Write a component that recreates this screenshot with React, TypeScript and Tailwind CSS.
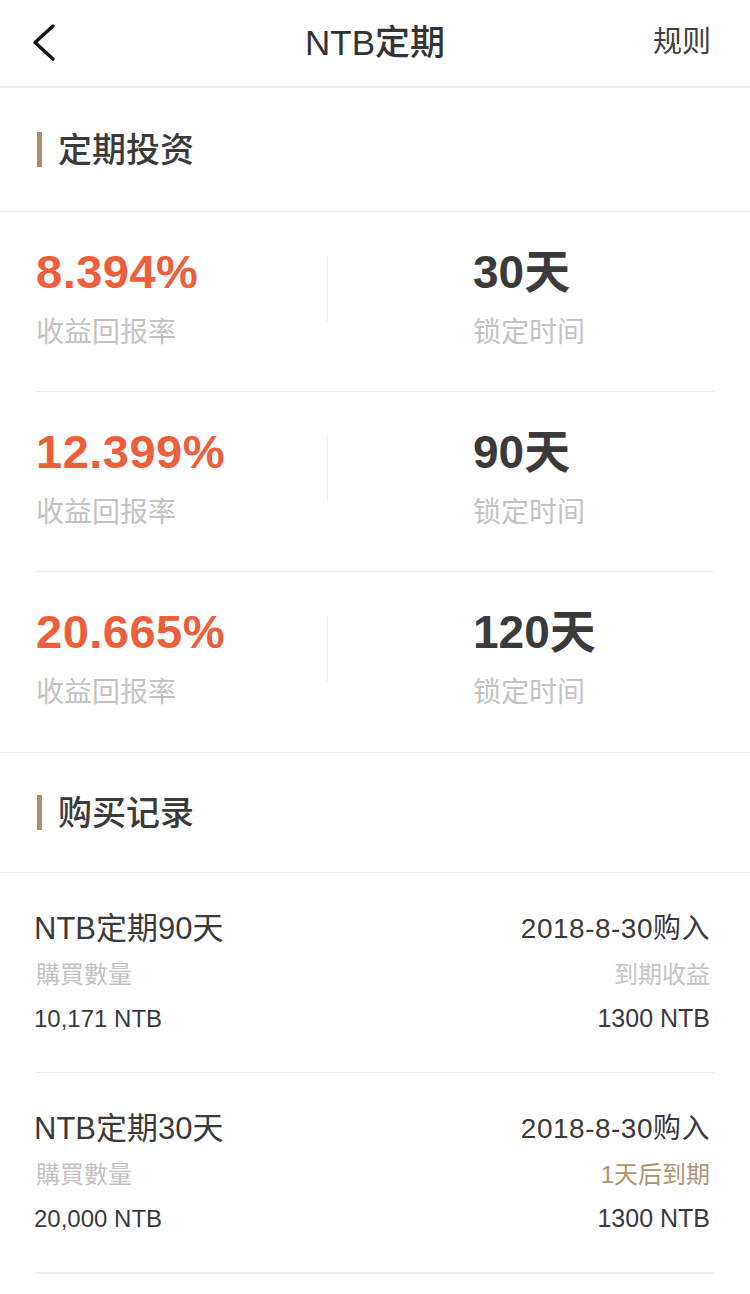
import React from 'react';

const font = "font-['Liberation_Sans','Noto_Sans_CJK_SC',sans-serif]";

const plans = [
  { rate: '8.394%', days: '30天' },
  { rate: '12.399%', days: '90天' },
  { rate: '20.665%', days: '120天' },
];

const records = [
  { name: 'NTB定期90天', date: '2018-8-30购入', status: '到期收益', amount: '10,171 NTB', profit: '1300 NTB', due: false },
  { name: 'NTB定期30天', date: '2018-8-30购入', status: '1天后到期', amount: '20,000 NTB', profit: '1300 NTB', due: true },
];

const SectionTitle: React.FC<{ title: string; height: string }> = ({ title, height }) => (
  <div className={`${height} flex items-center px-[37px] border-b border-[#ededed]`}>
    <div className="w-[5px] h-[35px] bg-[#a88d72]" />
    <span className="ml-[16px] text-[34px] leading-none font-medium text-[#3a3a3a]">{title}</span>
  </div>
);

const App: React.FC = () => {
  return (
    <div className={`w-[750px] min-h-[1294px] bg-white ${font}`}>
      <header className="h-[88px] flex items-center justify-between px-[32px] border-b-2 border-[#efefef] relative">
        <svg width="28" height="40" viewBox="0 0 28 40">
          <polyline points="21,3 3,19.5 21,36" fill="none" stroke="#111" strokeWidth="3.4" strokeLinecap="round" strokeLinejoin="round" />
        </svg>
        <span className="absolute left-1/2 -translate-x-1/2 text-[35px] font-medium text-[#333]">NTB定期</span>
        <span className="text-[29px] text-[#404040] mr-[7px]">规则</span>
      </header>

      <SectionTitle title="定期投资" height="h-[124px]" />

      <div className="px-[36px] border-b border-[#ededed]">
        {plans.map((p, i) => (
          <div key={p.rate} className={`h-[180px] flex ${i < plans.length - 1 ? 'border-b border-[#ededed]' : ''}`}>
            <div className="w-[291px] pt-[36px]">
              <div className="h-[48px] leading-[48px] text-[47px] font-bold text-[#ef5e3b] tracking-[0.5px]">{p.rate}</div>
              <div className="mt-[19px] h-[36px] leading-[36px] text-[28px] text-[#c3c3c3]">收益回报率</div>
            </div>
            <div className="w-px h-[65px] mt-[45px] bg-[#eeeeee]" />
            <div className="pl-[145px] pt-[36px]">
              <div className="h-[48px] leading-[48px] text-[46px] font-bold text-[#3a3a3a]">{p.days}</div>
              <div className="mt-[19px] h-[36px] leading-[36px] text-[28px] text-[#c3c3c3]">锁定时间</div>
            </div>
          </div>
        ))}
      </div>

      <SectionTitle title="购买记录" height="h-[120px]" />

      <div className="px-[36px]">
        {records.map((r, i) => (
          <div
            key={r.name}
            className={`pt-[36px] ${i < records.length - 1 ? 'h-[200px] border-b border-[#ededed]' : 'h-[201px] border-b-2 border-[#efefef]'}`}
          >
            <div className="flex justify-between items-center h-[40px]">
              <span className="text-[31px] text-[#3a3a3a] -ml-[2px]">{r.name}</span>
              <span className="text-[28px] tracking-[0.5px] text-[#3a3a3a] mr-[4px]">{r.date}</span>
            </div>
            <div className="flex justify-between items-center h-[40px] mt-[6px]">
              <span className="text-[24px] text-[#c3c3c3]">購買數量</span>
              <span className={`text-[24px] mr-[4px] ${r.due ? 'text-[#b3926f]' : 'text-[#c3c3c3]'}`}>{r.status}</span>
            </div>
            <div className="flex justify-between items-center h-[40px] mt-[4px]">
              <span className="text-[24px] text-[#3a3a3a] -ml-[2px]">{r.amount}</span>
              <span className="text-[25px] text-[#3a3a3a] mr-[4px]">{r.profit}</span>
            </div>
          </div>
        ))}
      </div>
    </div>
  );
};

export default App;
